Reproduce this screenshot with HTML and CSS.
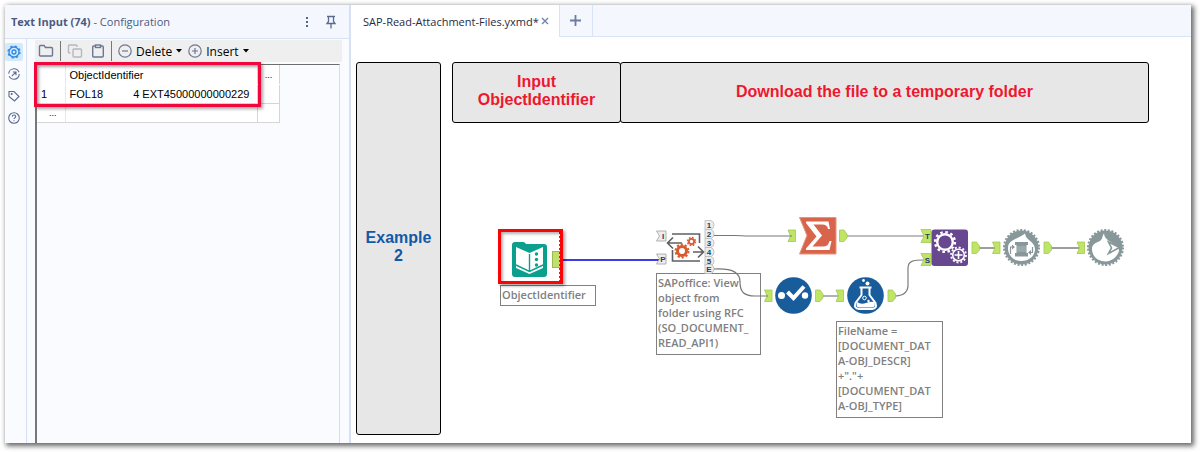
FILE: index.html
```html
<!DOCTYPE html>
<html lang="en">
<head>
<meta charset="utf-8">
<title>SAP-Read-Attachment-Files.yxmd</title>
<link rel="stylesheet" href="styles.css">
</head>
<body>
<div class="window">
  <section class="config">
    <header class="config-head">
      <h1 class="config-title"><strong>Text Input (74)</strong> <span class="config-sub">- Configuration</span></h1>
      <button class="icon-btn" aria-label="More options"><svg width="10" height="14" viewBox="0 0 10 14" fill="#55648c"><rect x="4" y="2" width="2" height="2"/><rect x="4" y="6" width="2" height="2"/><rect x="4" y="10" width="2" height="2"/></svg></button>
      <button class="icon-btn" aria-label="Pin panel"><svg width="12" height="14" viewBox="0 0 12 14" fill="none" stroke="#5c6a90" stroke-width="1.300"><path d="M2 1.500h8M3.500 1.500v5L2 8.500h8L8.500 6.500v-5M6 8.500v5"/></svg></button>
    </header>
    <div class="config-body">
      <nav class="rail" aria-label="Panel sections">
        <button class="rail-btn rail-active" aria-label="Configuration"><svg width="14" height="14" viewBox="0 0 14 14" fill="none" stroke="#2c8ae0"><circle cx="7" cy="7" r="5" stroke-width="1.300"/><circle cx="7" cy="7" r="6" stroke-width="1.200" stroke-dasharray="2.400 2.310"/><circle cx="7" cy="7" r="2" stroke-width="1.300"/></svg></button>
        <button class="rail-btn" aria-label="Navigation"><svg width="14" height="14" viewBox="0 0 14 14" fill="none" stroke="#5c6a90" stroke-width="1.100"><circle cx="7" cy="7" r="5.300" stroke-dasharray="14 2.600"/><path d="M4.800 9.200l4-4M5.800 5h3.200v3.200"/></svg></button>
        <button class="rail-btn" aria-label="Annotation"><svg width="14" height="14" viewBox="0 0 14 14" fill="none" stroke="#5c6a90" stroke-width="1.100"><path d="M2 2.500h5l5 5-4.500 4.500L2 7.500z"/><circle cx="4.700" cy="5" r=".5"/></svg></button>
        <button class="rail-btn" aria-label="Help"><svg width="14" height="14" viewBox="0 0 14 14" fill="none" stroke="#5c6a90" stroke-width="1.100"><circle cx="7" cy="7" r="5.300"/><path d="M5.300 5.700c0-2.200 3.400-2.200 3.400 0 0 1.200-1.700 1.200-1.700 2.400M7 9.200v1"/></svg></button>
      </nav>
      <div class="config-main">
        <div class="toolbar">
          <button class="tool-btn" aria-label="Open"><svg width="16" height="14" viewBox="0 0 16 14" fill="none" stroke="#6b7794" stroke-width="1.400"><path d="M1.500 12V2.500q0-1 1-1h3.500l1.500 2h6q1 0 1 1V11q0 1-1 1h-11q-1 0-1-1"/></svg></button>
          <span class="sep"></span>
          <button class="tool-btn" aria-label="Copy" disabled><svg width="16" height="14" viewBox="0 0 16 14" fill="none" stroke="#b4b8c0" stroke-width="1.400"><rect x="6" y="5" width="8.500" height="8" rx="1"/><path d="M3.500 9h-1q-1 0-1-1V2q0-1 1-1h6.500q1 0 1 1v1"/></svg></button>
          <button class="tool-btn paste" aria-label="Paste"><svg width="14" height="14" viewBox="0 0 14 14" fill="none" stroke="#6b7794" stroke-width="1.400"><rect x="1.700" y="2" width="10.600" height="11" rx="1"/><rect x="4.500" y="1" width="5" height="2.500" fill="#efefef"/></svg></button>
          <span class="sep"></span>
          <button class="tool-btn labelled"><svg width="14" height="14" viewBox="0 0 14 14" fill="none" stroke="#6b7794" stroke-width="1.200"><circle cx="7" cy="7" r="6.200"/><path d="M4 7h6"/></svg>Delete<svg class="caret" width="6" height="4" viewBox="0 0 6 4"><path d="M0 0h6L3 3.500z"/></svg></button>
          <button class="tool-btn labelled"><svg width="14" height="14" viewBox="0 0 14 14" fill="none" stroke="#6b7794" stroke-width="1.200"><circle cx="7" cy="7" r="6.200"/><path d="M4 7h6M7 4v6"/></svg>Insert<svg class="caret" width="6" height="4" viewBox="0 0 6 4"><path d="M0 0h6L3 3.500z"/></svg></button>
        </div>
        <div class="grid">
          <table class="data">
            <thead>
              <tr><th class="num"></th><th class="col">ObjectIdentifier</th><th class="more">...</th></tr>
            </thead>
            <tbody>
              <tr><td class="num">1</td><td class="col value">FOL18 <span class="value-id">4 EXT45000000000229</span></td><td></td></tr>
              <tr><td class="num add">...</td><td></td><td></td></tr>
            </tbody>
          </table>
          <div class="highlight"></div>
        </div>
      </div>
    </div>
  </section>

  <main class="workspace">
    <div class="tabs">
      <div class="tab"><span>SAP-Read-Attachment-Files.yxmd*</span><button class="icon-btn tab-close" aria-label="Close tab"><svg width="8" height="8" viewBox="0 0 8 8" stroke="#7484a8" stroke-width="1.400"><path d="M1 1l6 6M7 1L1 7"/></svg></button></div>
      <button class="tab-new" aria-label="New tab"><svg width="11" height="11" viewBox="0 0 11 11" stroke="#6c7b9f" stroke-width="1.800"><path d="M0 5.500h11M5.500 0v11"/></svg></button>
      <div class="tab-rest"></div>
    </div>
    <div class="canvas">
      <div class="tile tile-example">Example<br>2</div>
      <div class="tile-row">
        <div class="tile tile-input">Input<br>ObjectIdentifier</div>
        <div class="tile tile-download">Download the file to a temporary folder</div>
      </div>

      <div class="note note-input">ObjectIdentifier</div>
      <div class="note note-sap">SAPoffice: View<br>object from<br>folder using RFC<br>(SO_DOCUMENT_<br>READ_API1)</div>
      <div class="note note-file">FileName =<br>[DOCUMENT_DAT<br>A-OBJ_DESCR]<br>+"."+<br>[DOCUMENT_DAT<br>A-OBJ_TYPE]</div>

      <svg class="flow" width="840" height="406" viewBox="351 37 840 406">
        <defs>
          <path id="in" d="M0 0H7.500V11.500H0L2.500 6z" fill="#bfe566" stroke="#a3c854" stroke-width=".8"/>
          <path id="out" d="M0 0H4.500L7.500 4V8L4.500 11.500H0z" fill="#bfe566" stroke="#a3c854" stroke-width=".8"/>
          <path id="port" d="M0 0H6Q9 1 9 4.500T6 9H0z" fill="#ededed" stroke="#b9b9b9" stroke-width=".8"/>
          <path id="port-in" d="M0 0H9.500V10H0L3 5z" fill="#ededed" stroke="#a9a9a9" stroke-width=".9"/>
        </defs>

        <g fill="none" stroke="#7d7d7d" stroke-width="1.200">
          <path d="M846 236H926"/>
          <path d="M822 296H840"/>
          <path d="M894 296C903 296 908 293 908 285V268C908 261 913 260 924 260"/>
          <path d="M978 248H997M1051 248H1081" stroke-width="1.500"/>
        </g>
        <path d="M562 260H662" stroke="#3b3be8" stroke-width="2"/>

        <use href="#in" x="788" y="230"/><use href="#out" x="839.500" y="230"/>
        <use href="#in" x="764.500" y="290"/><use href="#out" x="815.500" y="290"/>
        <use href="#in" x="836" y="290"/><use href="#out" x="888" y="290"/>
        <use href="#out" x="972" y="242"/><use href="#in" x="992.500" y="242"/>
        <use href="#out" x="1044" y="242"/><use href="#in" x="1077" y="242"/>

        <path d="M921 229.500H931V242.500H921L924 236zM921 253.500H931V265.500H921L924 259.500z" fill="#bfe566" stroke="#a3c854" stroke-width=".8"/>
        <g class="port-text"><text x="927.500" y="239">T</text><text x="927.500" y="262.500">S</text></g>

        <g transform="translate(512 242)">
          <path d="M3 0H11Q13 0 14 2H32Q35 2 35 5V32Q35 35 32 35H3Q0 35 0 32V3Q0 0 3 0z" fill="#0c9f8d"/>
          <path d="M4 5L17.500 11 31 5V26L17.500 32 4 26z" fill="#fff"/>
          <path d="M4 23L17.500 29.500 31 23M17.500 12V29" fill="none" stroke="#0c9f8d" stroke-width="1.400"/>
          <g fill="#0c9f8d"><circle cx="24.500" cy="12" r="1.700"/><circle cx="24.500" cy="17.500" r="1.700"/><circle cx="24.500" cy="23" r="1.700"/></g>
        </g>
        <rect x="552.500" y="251.500" width="8" height="16" fill="#c0e06e" stroke="#9cb957"/>
        <path d="M559.500 232V281" stroke="#345fa8" stroke-dasharray="2 2"/>

        <use href="#port-in" x="656.500" y="231"/><use href="#port-in" x="656.500" y="254"/>
        <use href="#port" x="705" y="220.500"/><use href="#port" x="705" y="229.500"/><use href="#port" x="705" y="238.500"/><use href="#port" x="705" y="247.500"/><use href="#port" x="705" y="256.500"/><use href="#port" x="705" y="264.500"/>
        <g class="port-text">
          <text x="663" y="239">I</text><text x="663" y="262">P</text>
          <text x="709" y="228">1</text><text x="709" y="237">2</text><text x="709" y="246">3</text><text x="709" y="255">4</text><text x="709" y="264">5</text><text x="709" y="272">E</text>
        </g>
        <g fill="none" stroke="#777" stroke-width="1.200">
          <path d="M714 235.500H734C741 235.500 742 236 750 236H792"/>
          <path d="M714 269C735 268 740 274 740 282C740 292 744 296 755 296H768"/>
        </g>
        <g fill="none" stroke="#606060" stroke-width="1.600">
          <path d="M672 234H699.500V243M672.500 250V261H700"/>
          <path d="M682 243H668M673 237.500L667.500 243L673 248.500M693 252H703.500M698 246.500L703.500 252L698 257.500"/>
        </g>
        <g fill="none" stroke="#da5a2e">
          <circle cx="682" cy="251" r="4.500" stroke-width="3"/><circle cx="682" cy="251" r="6.500" stroke-width="2" stroke-dasharray="2.200 1.884"/>
          <circle cx="691.500" cy="241.500" r="2.600" stroke-width="1.800"/><circle cx="691.500" cy="241.500" r="4" stroke-width="1.500" stroke-dasharray="1.700 1.442"/>
        </g>

        <path d="M799.500 217.500H836V254H799.500L807 235.500z" fill="#d8654b" stroke="#e5947f"/>
        <path d="M806 221.500H828.500L830 229H828Q827.500 224.500 822 224.500H813.500L822 235.500L812.500 246.500H823Q828.500 246.500 829.500 241H831.500L829.500 250H806V248.500L816.500 236.500L806 223z" fill="#fff"/>

        <circle cx="793.500" cy="295.500" r="18.300" fill="#185c9c"/>
        <g fill="#fff"><circle cx="781.500" cy="295.500" r="3.500"/><circle cx="805" cy="295.500" r="3.200"/></g>
        <path d="M787.500 292L793.500 298L804 286.500" fill="none" stroke="#fff" stroke-width="4"/>

        <circle cx="865.500" cy="295.500" r="18.300" fill="#185c9c"/>
        <path d="M861.500 288V295L855.500 303Q853.500 308.500 859 309H872Q877.500 308.500 875.500 303L869.500 295V288" fill="#185c9c" stroke="#fff" stroke-width="2"/>
        <path d="M859.500 287.500H871.500" stroke="#fff" stroke-width="2"/>
        <path d="M857 302Q861 305 866 303T874.500 302Q876 307 872 307.500H859Q855.500 307 857 302z" fill="#fff"/>
        <g fill="#fff"><circle cx="867.500" cy="283.500" r="2"/><circle cx="863.500" cy="280.500" r="1.400"/><circle cx="868.500" cy="301" r="1.200"/></g>
        <circle cx="864.500" cy="298" r="1.800" fill="none" stroke="#fff"/>

        <rect x="931.500" y="229.500" width="36.500" height="36.500" rx="3" fill="#67478f"/>
        <g fill="none" stroke="#fff">
          <circle cx="945" cy="242" r="7.800" stroke-width="2.400"/><circle cx="945" cy="242" r="9.900" stroke-width="2.400" stroke-dasharray="2.600 2.584"/>
        </g>
        <circle cx="958.500" cy="255" r="8.500" fill="#67478f"/>
        <g fill="none" stroke="#fff">
          <circle cx="958.500" cy="255" r="5.800" stroke-width="1.600"/><circle cx="958.500" cy="255" r="7.500" stroke-width="1.800" stroke-dasharray="2 1.927"/><path d="M954.500 255H962.500M958.500 251V259" stroke-width="1.600"/>
        </g>

        <g fill="#889799" stroke="none"><circle cx="1021.500" cy="247.500" r="17"/><circle cx="1105.500" cy="247.500" r="17"/></g>
        <g fill="none" stroke="#889799" stroke-width="2" stroke-dasharray="2 1.665">
          <circle cx="1021.500" cy="247.500" r="17.500"/><circle cx="1105.500" cy="247.500" r="17.500"/>
        </g>
        <path d="M1025 233.500C1026 241 1034.500 241 1035 249C1035 256 1029 261 1021.500 261C1013 261 1008 255 1008 248C1008 239 1019 239 1025 233.500z" fill="#fff"/>
        <path d="M1015 242H1028V245H1026.500V253H1028V256.500H1015V253H1016.500V245H1015z" fill="#889799"/>
        <path d="M1017 247H1026M1017 249H1026M1017 251H1026" stroke="#c3cbcc" stroke-width=".7"/>
        <path d="M1010.500 254V247H1013M1032.500 247V252.500H1030" fill="none" stroke="#889799" stroke-width="1.200"/>
        <path d="M1012 244.500L1015 247L1012 249.500zM1031 250L1028 252.500L1031 255z" fill="#889799"/>
        <path d="M1104 233.500C1102 236 1103 239.500 1099 241.500C1095 243 1091.500 245 1092 250C1093 257 1098 261.500 1106 261.500C1112 261 1117 257 1119 251C1119 243 1105 243 1104 233.500z" fill="#fff"/>
        <path d="M1108.500 242L1119.500 247.500L1108.500 253.500L1111.500 248z" fill="#fff" stroke="#889799" stroke-width="1.600"/>
      </svg>
      <div class="selected-frame"></div>
    </div>
  </main>
</div>
</body>
</html>
```

FILE: styles.css
```css
* { box-sizing: border-box; }

body {
  margin: 0;
  min-height: 100vh;
  display: flex;
  padding: 5px 9px 9px 5px;
  background: #fff;
  font-family: "Open Sans", "Noto Sans", sans-serif;
  font-size: 11px;
  color: #222;
}

button {
  font: inherit;
  color: inherit;
  border: 0;
  padding: 0;
  background: none;
  display: flex;
  align-items: center;
  justify-content: center;
}

svg { display: block; flex: none; }

.window {
  flex: 1;
  display: flex;
  background: #fff;
  box-shadow: 2px 2px 5px 1px rgba(0, 0, 0, 0.6);
}

/* Configuration panel */
.config {
  width: 346px;
  flex: none;
  display: flex;
  flex-direction: column;
  background: #f9fbfe;
  border-right: 2px solid #d8e1f3;
}

.config-head {
  display: flex;
  align-items: center;
  gap: 13px;
  height: 34px;
  padding: 0 12px 0 6px;
  background: #f4f8fe;
  border-bottom: 1px solid #d8e3f5;
}

.config-title {
  flex: 1;
  margin: 0;
  font-size: 11px;
  font-weight: 400;
  color: #4c5a80;
}

.config-body { flex: 1; display: flex; }

.rail {
  width: 22px;
  display: flex;
  flex-direction: column;
  gap: 4px;
  padding-top: 4px;
  border-right: 1px solid #d8e1f3;
}

.rail-btn { width: 18px; height: 18px; }
.rail-active { background: #d5e9fd; border-radius: 2px; }

.config-main {
  flex: 1;
  display: flex;
  flex-direction: column;
  gap: 2px;
  padding: 1px 7px 0 8px;
}

.toolbar {
  display: flex;
  align-items: center;
  height: 22px;
  padding-left: 3px;
  background: #efefef;
  color: #000;
  font-size: 12px;
}

.sep { width: 1px; height: 20px; margin: 0 6px; background: #777; }
.paste { margin-left: 8px; }
.labelled { gap: 4px; margin-right: 6px; }

.grid {
  flex: 1;
  position: relative;
  margin-right: 2px;
  border-top: 1px solid #6d6d6d;
  border-left: 2px solid #777;
  border-right: 1px solid #ddd;
}

.data {
  width: 243px;
  table-layout: fixed;
  border-collapse: collapse;
  background: #fff;
  color: #000;
  font-family: "Liberation Sans", Arial, sans-serif;
  font-size: 11px;
  line-height: 18px;
}

.data th, .data td {
  height: 19px;
  padding: 0 4px;
  border-right: 1px solid #d5d5d5;
  border-bottom: 1px solid #d5d5d5;
  font-weight: 400;
  text-align: left;
  white-space: nowrap;
}

.data th { border-bottom-color: #fff; padding-top: 1px; }
.data .num { width: 28px; border-right-color: #e8e8e8; }
.data .more { width: 22px; padding: 0; text-align: center; font-size: 9px; }
.data .add { padding: 0 8px 0 0; text-align: right; font-size: 9px; }
.value-id { margin-left: 27px; }

.highlight {
  position: absolute;
  left: -3px;
  top: -3px;
  width: 227px;
  height: 45px;
  border: 3px solid #f0073c;
  box-shadow: 2px 2px 3px rgba(0, 0, 0, 0.35), inset 2px 2px 3px rgba(0, 0, 0, 0.35);
}

/* Workspace */
.workspace {
  flex: 1;
  min-width: 0;
  display: flex;
  flex-direction: column;
}

.tabs {
  display: flex;
  height: 32px;
  background: #f4f8fe;
}

.tab {
  display: flex;
  align-items: center;
  gap: 2px;
  padding: 0 10px 0 12px;
  background: #fff;
  font-size: 11px;
  color: #1f2a44;
}

.tab-new, .tab-rest {
  border-left: 1px solid #d8e3f5;
  border-bottom: 1px solid #d8e3f5;
}

.tab-new { width: 33px; }
.tab-rest { flex: 1; }

.canvas {
  flex: 1;
  position: relative;
  display: flex;
  gap: 11px;
  padding: 25px 42px 8px 5px;
}

.tile {
  display: flex;
  align-items: center;
  justify-content: center;
  border: 1px solid #000;
  border-radius: 3px;
  background: #e7e7e7;
  color: #ee1730;
  font-family: "Liberation Sans", Arial, sans-serif;
  font-size: 16px;
  font-weight: 700;
  line-height: 18px;
  text-align: center;
}

.tile-example { width: 85px; flex: none; padding-bottom: 4px; color: #1259a8; }
.tile-row { flex: 1; display: flex; align-items: flex-start; }
.tile-input { width: 169px; height: 61px; padding-bottom: 4px; }
.tile-download { flex: 1; height: 61px; margin-left: -1px; padding-bottom: 2px; }

.note {
  position: absolute;
  padding: 1px;
  border: 1px solid #808080;
  background: #fff;
  color: #808080;
  font-size: 11px;
  font-weight: 600;
  line-height: 15px;
  white-space: nowrap;
}

.note-input { left: 149px; top: 248px; width: 96px; height: 21px; }
.note-sap { left: 305px; top: 236px; width: 105px; height: 82px; }
.note-file { left: 485px; top: 284px; width: 107px; height: 97px; }

.flow { position: absolute; left: 0; top: 0; }

.port-text {
  fill: #27405f;
  font-family: "Liberation Sans", Arial, sans-serif;
  font-size: 8px;
  font-weight: 700;
  text-anchor: middle;
}

.selected-frame {
  position: absolute;
  left: 147px;
  top: 192px;
  width: 65px;
  height: 55px;
  border: 3px solid #fa0505;
  box-shadow: 2px 2px 3px rgba(0, 0, 0, 0.35), inset 2px 2px 3px rgba(0, 0, 0, 0.3);
}
```
